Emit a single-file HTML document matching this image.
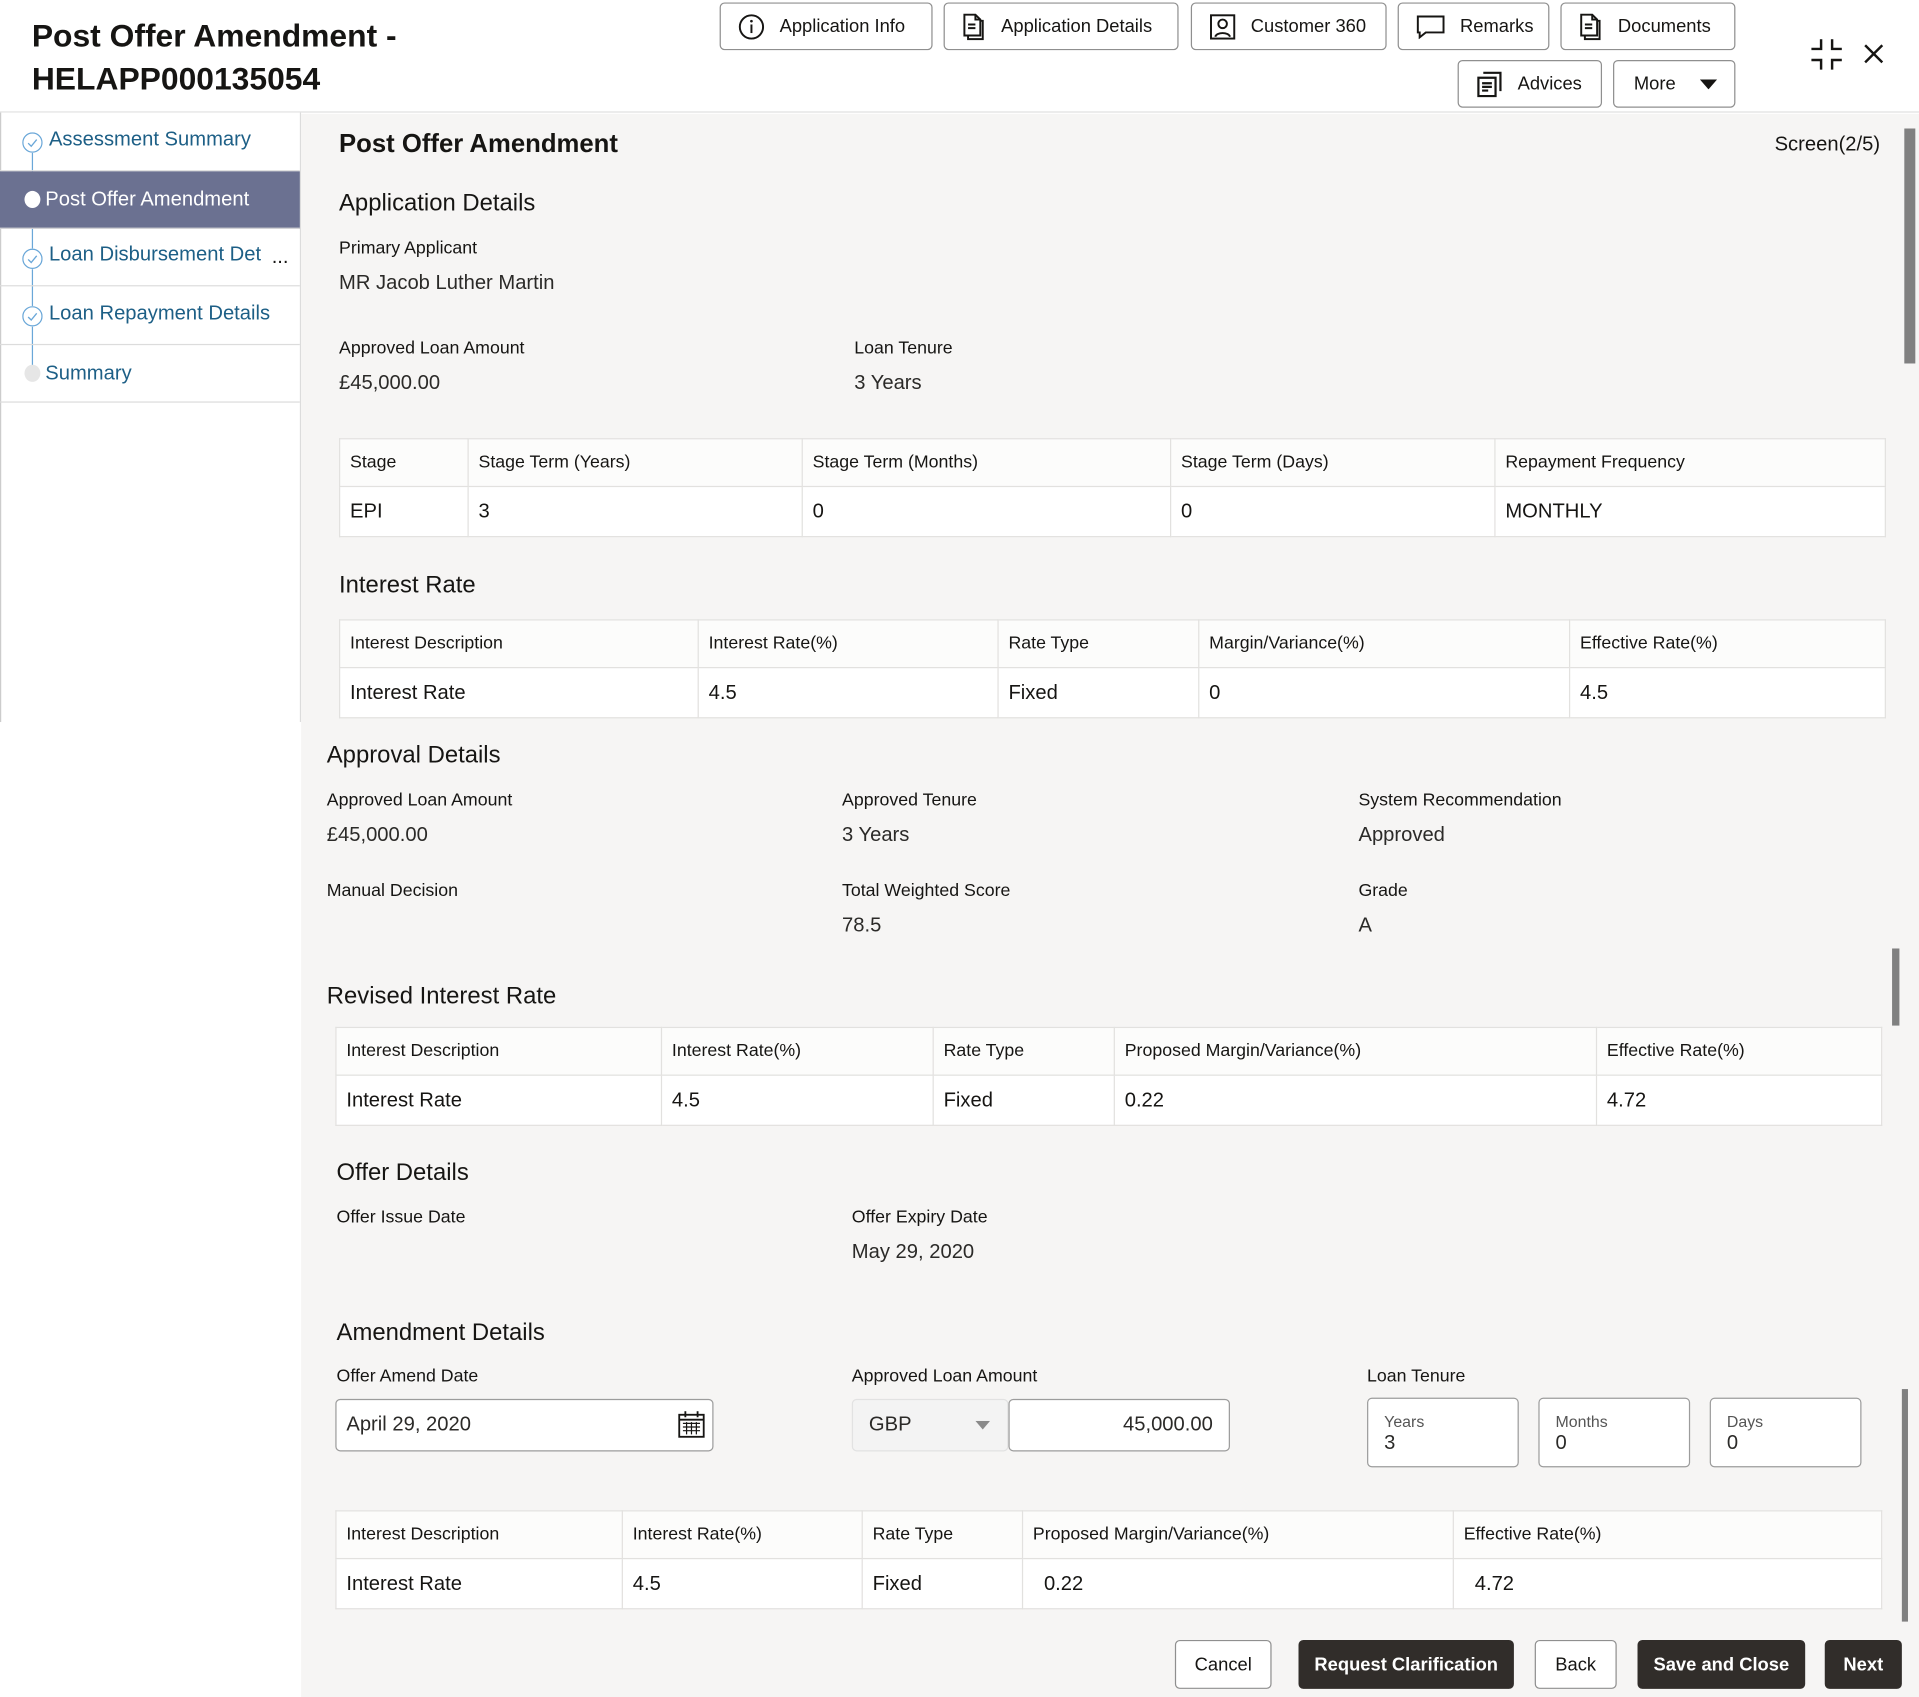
<!DOCTYPE html>
<html><head><meta charset="utf-8">
<style>
*{box-sizing:border-box;margin:0;padding:0}
html,body{width:1919px;height:1697px;overflow:hidden;background:#fff}
#w{position:absolute;left:0;top:0;width:1568px;height:1387px;transform:scale(1.22385);transform-origin:0 0;font-family:"Liberation Sans",sans-serif;color:#161513}
.a{position:absolute;white-space:nowrap}
.bg{position:absolute;background:#f6f5f4}
.btn{position:absolute;border:1px solid #8f8f8f;border-radius:4px;background:#fff;font-size:15px;display:flex;align-items:center;padding-left:14px;gap:12px}
.lbl{font-size:14.5px}
.val{font-size:16.5px;color:#2b2a28}
.h2{font-size:19.5px}
table{position:absolute;border-collapse:collapse;background:#fff;font-size:14.5px}
td{border:1px solid #e2e1df;padding:0 8px}
tr.h td{height:39px;background:#fcfcfb}
tr.d td{height:41px;font-size:16.5px}
.dk{position:absolute;background:#312d2a;color:#fff;border-radius:4px;font-size:15px;font-weight:bold;display:flex;align-items:center;justify-content:center}
.lt{position:absolute;background:#fff;border:1px solid #8f8f8f;border-radius:4px;font-size:15px;display:flex;align-items:center;justify-content:center}
.side{position:absolute;left:0;width:245px;border-bottom:1px solid #dcdcdc;font-size:16.5px;color:#1d5f86}
.side span{position:absolute;left:40px;top:13px}
.chk{position:absolute;left:18px;width:17px;height:17px;background:#fff}
.box{position:absolute;background:#fff;border:1px solid #9c9c9c;border-radius:4px}
</style></head><body><div id="w">
<div class="bg" style="left:246px;top:93px;width:1322px;height:1294px"></div>
<div style="position:absolute;left:0;top:0;width:1568px;height:92px;background:#fff;border-bottom:1px solid #e0e0e0"></div>
<div style="position:absolute;left:0;top:92px;width:246px;height:498px;background:#fff;border-right:1px solid #dcdcdc;border-left:1px solid #ccc"></div>

<div class="a" style="left:26px;top:12px;font-size:26px;font-weight:bold;line-height:35px">Post Offer Amendment -<br>HELAPP000135054</div>
<div class="btn" style="left:588px;top:2px;width:174px;height:39px"><svg width="22" height="22" viewBox="0 0 22 22"><circle cx="11" cy="11" r="9.5" fill="none" stroke="#161513" stroke-width="1.6"/><rect x="10.2" y="9" width="1.6" height="7" fill="#161513"/><circle cx="11" cy="6.3" r="1.1" fill="#161513"/></svg>Application Info</div>
<div class="btn" style="left:771px;top:2px;width:192px;height:39px"><svg width="20" height="22" viewBox="0 0 20 22"><path d="M2 1h9l4 4v13H2z M11 1v4h4 M5 9h6 M5 12h6 M15 6h2v15H5v-3" fill="none" stroke="#161513" stroke-width="1.6"/></svg>Application Details</div>
<div class="btn" style="left:973px;top:2px;width:160px;height:39px"><svg width="22" height="22" viewBox="0 0 22 22"><rect x="1.5" y="1.5" width="19" height="19" fill="none" stroke="#161513" stroke-width="1.6"/><circle cx="11" cy="8.5" r="3.5" fill="none" stroke="#161513" stroke-width="1.6"/><path d="M5 19c1-4 11-4 12 0" fill="none" stroke="#161513" stroke-width="1.6"/></svg>Customer 360</div>
<div class="btn" style="left:1142px;top:2px;width:124px;height:39px"><svg width="24" height="20" viewBox="0 0 24 20"><path d="M1.5 1.5h21v13H8l-5 4v-4H1.5z" fill="none" stroke="#161513" stroke-width="1.6"/></svg>Remarks</div>
<div class="btn" style="left:1275px;top:2px;width:143px;height:39px"><svg width="20" height="22" viewBox="0 0 20 22"><path d="M2 1h9l4 4v13H2z M11 1v4h4 M5 9h6 M5 12h6 M15 6h2v15H5v-3" fill="none" stroke="#161513" stroke-width="1.6"/></svg>Documents</div>
<div class="btn" style="left:1191px;top:49px;width:118px;height:39px"><svg width="22" height="22" viewBox="0 0 22 22"><path d="M6 1.5h14v15 M2 5.5h14v15H2z M5 10h8 M5 13h8 M5 16h5" fill="none" stroke="#161513" stroke-width="1.8"/></svg>Advices</div>
<div class="btn" style="left:1318px;top:49px;width:100px;height:39px;padding-left:16px">More<svg style="margin-left:8px" width="14" height="8" viewBox="0 0 14 8"><path d="M0 0h14L7 8z" fill="#161513"/></svg></div>
<svg class="a" style="left:1480px;top:32px" width="25" height="25" viewBox="0 0 25 25"><path d="M8 0v8H0 M17 0v8h8 M8 25v-8H0 M17 25v-8h8" fill="none" stroke="#161513" stroke-width="2"/></svg>
<svg class="a" style="left:1523px;top:36px" width="16" height="16" viewBox="0 0 16 16"><path d="M1 1l14 14M15 1L1 15" stroke="#161513" stroke-width="2"/></svg>

<div style="position:absolute;left:26px;top:118px;width:1px;height:190px;background:#6aa7d8"></div>
<div class="side" style="top:92px;height:48px"><svg class="chk" style="top:16px" viewBox="0 0 17 17"><circle cx="8.5" cy="8.5" r="7.8" fill="#fff" stroke="#6aa7d8"/><path d="M5 9l2.5 2.5L12 6" fill="none" stroke="#6aa7d8" stroke-width="1.1"/></svg><span>Assessment Summary</span></div>
<div class="side" style="top:140px;height:47px;background:#6b7191;color:#fff"><div style="position:absolute;left:20px;top:16px;width:13px;height:14px;border-radius:50%;background:#fff"></div><span style="left:37px;top:14px">Post Offer Amendment</span></div>
<div class="side" style="top:187px;height:47px"><svg class="chk" style="top:16px" viewBox="0 0 17 17"><circle cx="8.5" cy="8.5" r="7.8" fill="#fff" stroke="#6aa7d8"/><path d="M5 9l2.5 2.5L12 6" fill="none" stroke="#6aa7d8" stroke-width="1.1"/></svg><span style="top:12px">Loan Disbursement Det</span><span style="left:222px;top:14px;color:#161513">...</span></div>
<div class="side" style="top:234px;height:48px"><svg class="chk" style="top:16px" viewBox="0 0 17 17"><circle cx="8.5" cy="8.5" r="7.8" fill="#fff" stroke="#6aa7d8"/><path d="M5 9l2.5 2.5L12 6" fill="none" stroke="#6aa7d8" stroke-width="1.1"/></svg><span>Loan Repayment Details</span></div>
<div class="side" style="top:282px;height:47px"><div style="position:absolute;left:20px;top:16px;width:13px;height:14px;border-radius:50%;background:#e6e6e6"></div><span style="left:37px;top:14px">Summary</span></div>

<div style="position:absolute;left:1556px;top:105px;width:9px;height:192px;background:#808080"></div>
<div style="position:absolute;left:1546px;top:775px;width:6px;height:63px;background:#808080"></div>
<div style="position:absolute;left:1554px;top:1135px;width:5px;height:190px;background:#808080"></div>

<div class="a" style="left:277px;top:106px;font-size:21px;font-weight:bold">Post Offer Amendment</div>
<div class="a" style="left:1450px;top:109px;font-size:16.5px">Screen(2/5)</div>
<div class="a h2" style="left:277px;top:155px">Application Details</div>
<div class="a lbl" style="left:277px;top:195px">Primary Applicant</div>
<div class="a val" style="left:277px;top:222px">MR Jacob Luther Martin</div>
<div class="a lbl" style="left:277px;top:277px">Approved Loan Amount</div>
<div class="a val" style="left:277px;top:304px">£45,000.00</div>
<div class="a lbl" style="left:698px;top:277px">Loan Tenure</div>
<div class="a val" style="left:698px;top:304px">3 Years</div>

<table style="left:277px;top:358px;width:1264px"><colgroup><col style="width:105px"><col style="width:273px"><col style="width:301px"><col style="width:265px"><col></colgroup>
<tr class="h"><td>Stage</td><td>Stage Term (Years)</td><td>Stage Term (Months)</td><td>Stage Term (Days)</td><td>Repayment Frequency</td></tr>
<tr class="d"><td>EPI</td><td>3</td><td>0</td><td>0</td><td>MONTHLY</td></tr></table>

<div class="a h2" style="left:277px;top:467px">Interest Rate</div>
<table style="left:277px;top:506px;width:1264px"><colgroup><col style="width:293px"><col style="width:245px"><col style="width:164px"><col style="width:303px"><col></colgroup>
<tr class="h"><td>Interest Description</td><td>Interest Rate(%)</td><td>Rate Type</td><td>Margin/Variance(%)</td><td>Effective Rate(%)</td></tr>
<tr class="d"><td>Interest Rate</td><td>4.5</td><td>Fixed</td><td>0</td><td>4.5</td></tr></table>

<div style="position:absolute;left:0;top:590px;width:246px;height:797px;background:#fff"></div>

<div class="a h2" style="left:267px;top:606px">Approval Details</div>
<div class="a lbl" style="left:267px;top:646px">Approved Loan Amount</div>
<div class="a val" style="left:267px;top:673px">£45,000.00</div>
<div class="a lbl" style="left:688px;top:646px">Approved Tenure</div>
<div class="a val" style="left:688px;top:673px">3 Years</div>
<div class="a lbl" style="left:1110px;top:646px">System Recommendation</div>
<div class="a val" style="left:1110px;top:673px">Approved</div>
<div class="a lbl" style="left:267px;top:720px">Manual Decision</div>
<div class="a lbl" style="left:688px;top:720px">Total Weighted Score</div>
<div class="a val" style="left:688px;top:747px">78.5</div>
<div class="a lbl" style="left:1110px;top:720px">Grade</div>
<div class="a val" style="left:1110px;top:747px">A</div>

<div class="a h2" style="left:267px;top:803px">Revised Interest Rate</div>
<table style="left:274px;top:839px;width:1264px"><colgroup><col style="width:266px"><col style="width:222px"><col style="width:148px"><col style="width:394px"><col></colgroup>
<tr class="h"><td>Interest Description</td><td>Interest Rate(%)</td><td>Rate Type</td><td>Proposed Margin/Variance(%)</td><td>Effective Rate(%)</td></tr>
<tr class="d"><td>Interest Rate</td><td>4.5</td><td>Fixed</td><td>0.22</td><td>4.72</td></tr></table>

<div class="a h2" style="left:275px;top:947px">Offer Details</div>
<div class="a lbl" style="left:275px;top:987px">Offer Issue Date</div>
<div class="a lbl" style="left:696px;top:987px">Offer Expiry Date</div>
<div class="a val" style="left:696px;top:1014px">May 29, 2020</div>

<div class="a h2" style="left:275px;top:1078px">Amendment Details</div>
<div class="a lbl" style="left:275px;top:1117px">Offer Amend Date</div>
<div class="box" style="left:274px;top:1143px;width:309px;height:43px"><span class="a val" style="left:8px;top:11px">April 29, 2020</span>
<svg class="a" style="left:279px;top:9px" width="22" height="22" viewBox="0 0 22 22"><rect x="1" y="3" width="20" height="18" fill="none" stroke="#161513" stroke-width="1.5"/><path d="M1 7h20M6 0v5M16 0v5" stroke="#161513" stroke-width="1.5"/><path d="M4 10h14M4 13h14M4 16h14M7 9v10M11 9v10M15 9v10" stroke="#161513" stroke-width="1"/></svg></div>
<div class="a lbl" style="left:696px;top:1117px">Approved Loan Amount</div>
<div class="box" style="left:696px;top:1143px;width:128px;height:43px;background:#f3f3f3;border-color:#e2e2e2"><span class="a val" style="left:13px;top:11px">GBP</span><svg class="a" style="left:100px;top:17px" width="12" height="7"><path d="M0 0h12L6 7z" fill="#8a8a8a"/></svg></div>
<div class="box" style="left:824px;top:1143px;width:181px;height:43px"><span class="a val" style="right:13px;top:11px">45,000.00</span></div>
<div class="a lbl" style="left:1117px;top:1117px">Loan Tenure</div>
<div class="box" style="left:1117px;top:1142px;width:124px;height:57px"><span class="a" style="left:13px;top:11px;font-size:13px;color:#555">Years</span><span class="a val" style="left:13px;top:27px">3</span></div>
<div class="box" style="left:1257px;top:1142px;width:124px;height:57px"><span class="a" style="left:13px;top:11px;font-size:13px;color:#555">Months</span><span class="a val" style="left:13px;top:27px">0</span></div>
<div class="box" style="left:1397px;top:1142px;width:124px;height:57px"><span class="a" style="left:13px;top:11px;font-size:13px;color:#555">Days</span><span class="a val" style="left:13px;top:27px">0</span></div>

<table style="left:274px;top:1234px;width:1264px"><colgroup><col style="width:234px"><col style="width:196px"><col style="width:131px"><col style="width:352px"><col></colgroup>
<tr class="h"><td>Interest Description</td><td>Interest Rate(%)</td><td>Rate Type</td><td>Proposed Margin/Variance(%)</td><td>Effective Rate(%)</td></tr>
<tr class="d"><td>Interest Rate</td><td>4.5</td><td>Fixed</td><td style="padding-left:17px">0.22</td><td style="padding-left:17px">4.72</td></tr></table>

<div class="lt" style="left:960px;top:1340px;width:79px;height:40px">Cancel</div>
<div class="dk" style="left:1061px;top:1340px;width:176px;height:40px">Request Clarification</div>
<div class="lt" style="left:1254px;top:1340px;width:67px;height:40px">Back</div>
<div class="dk" style="left:1338px;top:1340px;width:137px;height:40px">Save and Close</div>
<div class="dk" style="left:1491px;top:1340px;width:63px;height:40px">Next</div>
</div></body></html>
